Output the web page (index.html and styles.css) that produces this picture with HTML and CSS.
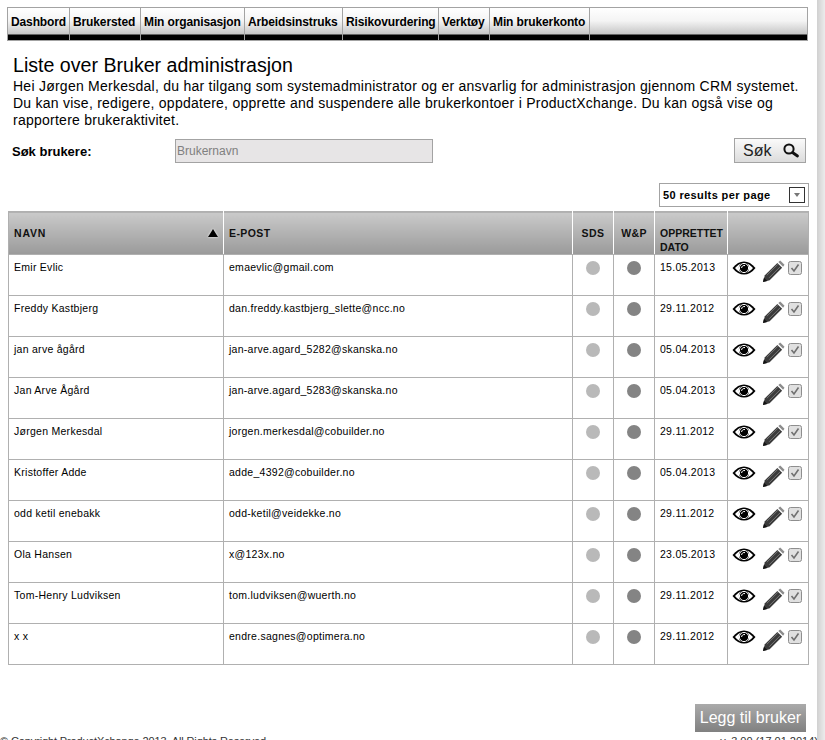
FILE: index.html
```html
<!DOCTYPE html>
<html>
<head>
    <title>Liste over Bruker administrasjon</title>
    <link rel="stylesheet" href="styles.css">
</head>
<body>
    <svg class="defs" width="0" height="0">
        <symbol id="eye" viewBox="0 0 24 14">
            <path d="M0.5 7C4 2.4 8 0.4 12 0.4S20 2.4 23.5 7C20 11.6 16 13.6 12 13.6S4 11.6 0.5 7Z" fill="#000"/>
            <path d="M3 7C5.5 4 8 2.6 9 2.4A6 6 0 0 0 9 11.6C8 11.4 5.5 10 3 7ZM21 7C18.5 4 16 2.6 15 2.4A6 6 0 0 1 15 11.6C16 11.4 18.5 10 21 7Z" fill="#fff"/>
            <circle cx="12" cy="7" r="4.6" fill="none" stroke="#fff" stroke-width="1"/>
            <path d="M9.6 7A2.6 2.6 0 0 1 13 4.6" fill="none" stroke="#fff" stroke-width="1"/>
        </symbol>
        <symbol id="pencil" viewBox="0 0 24 24">
            <path d="M1 23L3 16L16 3L21 8L8 21Z" fill="#3a3a3a"/>
            <path d="M5 16L16.5 4.5M7.5 18.5L19 7" stroke="#777" stroke-width="1"/>
            <path d="M17 2L19 0.5L23.5 5L22 7Z" fill="#8c8c8c"/>
            <path d="M1 23L2 18.5L5.5 22Z" fill="#111"/>
        </symbol>
        <symbol id="check" viewBox="0 0 14 14">
            <rect x="0.5" y="0.5" width="13" height="13" rx="2" fill="#e0e0e0" stroke="#8e8e8e"/>
            <path d="M3.5 7L6 10L10.5 3.5" fill="none" stroke="#707070" stroke-width="1.6"/>
        </symbol>
    </svg>

    <div class="page">
        <!-- top menu -->
        <ul class="menu">
            <li>Dashbord</li>
            <li>Brukersted</li>
            <li>Min organisasjon</li>
            <li>Arbeidsinstruks</li>
            <li>Risikovurdering</li>
            <li>Verktøy</li>
            <li>Min brukerkonto</li>
            <li class="menu-rest"></li>
        </ul>

        <div class="intro">
            <h1>Liste over Bruker administrasjon</h1>
            <p>Hei Jørgen Merkesdal, du har tilgang som systemadministrator og er ansvarlig for administrasjon gjennom CRM systemet. Du kan vise, redigere, oppdatere, opprette and suspendere alle brukerkontoer i ProductXchange. Du kan også vise og rapportere brukeraktivitet.</p>
        </div>

        <!-- search -->
        <div class="search">
            <label class="search-label">Søk brukere:</label>
            <input class="search-input" type="text" placeholder="Brukernavn">
            <a class="search-button" href="#">Søk
                <svg width="18" height="15" viewBox="0 0 18 15"><circle cx="7" cy="6" r="4.6" fill="none" stroke="#111" stroke-width="2"/><path d="M10.5 9.5L15.5 13" stroke="#111" stroke-width="2.8" stroke-linecap="round"/></svg>
            </a>
        </div>

        <div class="pager">
            <div class="per-page">50 results per page <span class="arrow"></span></div>
        </div>

        <table class="users">
            <thead>
                <tr>
                    <th class="col-name">NAVN<span class="sort"></span></th>
                    <th class="col-mail">E-POST</th>
                    <th class="col-dot mid">SDS</th>
                    <th class="col-dot mid">W&amp;P</th>
                    <th class="col-date">OPPRETTET DATO</th>
                    <th class="col-act"></th>
                </tr>
            </thead>
            <tbody>
                <tr><td>Emir Evlic</td><td>emaevlic@gmail.com</td><td class="mid"><i class="dot light"></i></td><td class="mid"><i class="dot dark"></i></td><td>15.05.2013</td><td class="actions"><svg class="i-eye"><use href="#eye"/></svg><svg class="i-pencil"><use href="#pencil"/></svg><svg class="i-check"><use href="#check"/></svg></td></tr>
                <tr><td>Freddy Kastbjerg</td><td>dan.freddy.kastbjerg_slette@ncc.no</td><td class="mid"><i class="dot light"></i></td><td class="mid"><i class="dot dark"></i></td><td>29.11.2012</td><td class="actions"><svg class="i-eye"><use href="#eye"/></svg><svg class="i-pencil"><use href="#pencil"/></svg><svg class="i-check"><use href="#check"/></svg></td></tr>
                <tr><td>jan arve ågård</td><td>jan-arve.agard_5282@skanska.no</td><td class="mid"><i class="dot light"></i></td><td class="mid"><i class="dot dark"></i></td><td>05.04.2013</td><td class="actions"><svg class="i-eye"><use href="#eye"/></svg><svg class="i-pencil"><use href="#pencil"/></svg><svg class="i-check"><use href="#check"/></svg></td></tr>
                <tr><td>Jan Arve Ågård</td><td>jan-arve.agard_5283@skanska.no</td><td class="mid"><i class="dot light"></i></td><td class="mid"><i class="dot dark"></i></td><td>05.04.2013</td><td class="actions"><svg class="i-eye"><use href="#eye"/></svg><svg class="i-pencil"><use href="#pencil"/></svg><svg class="i-check"><use href="#check"/></svg></td></tr>
                <tr><td>Jørgen Merkesdal</td><td>jorgen.merkesdal@cobuilder.no</td><td class="mid"><i class="dot light"></i></td><td class="mid"><i class="dot dark"></i></td><td>29.11.2012</td><td class="actions"><svg class="i-eye"><use href="#eye"/></svg><svg class="i-pencil"><use href="#pencil"/></svg><svg class="i-check"><use href="#check"/></svg></td></tr>
                <tr><td>Kristoffer Adde</td><td>adde_4392@cobuilder.no</td><td class="mid"><i class="dot light"></i></td><td class="mid"><i class="dot dark"></i></td><td>05.04.2013</td><td class="actions"><svg class="i-eye"><use href="#eye"/></svg><svg class="i-pencil"><use href="#pencil"/></svg><svg class="i-check"><use href="#check"/></svg></td></tr>
                <tr><td>odd ketil enebakk</td><td>odd-ketil@veidekke.no</td><td class="mid"><i class="dot light"></i></td><td class="mid"><i class="dot dark"></i></td><td>29.11.2012</td><td class="actions"><svg class="i-eye"><use href="#eye"/></svg><svg class="i-pencil"><use href="#pencil"/></svg><svg class="i-check"><use href="#check"/></svg></td></tr>
                <tr><td>Ola Hansen</td><td>x@123x.no</td><td class="mid"><i class="dot light"></i></td><td class="mid"><i class="dot dark"></i></td><td>23.05.2013</td><td class="actions"><svg class="i-eye"><use href="#eye"/></svg><svg class="i-pencil"><use href="#pencil"/></svg><svg class="i-check"><use href="#check"/></svg></td></tr>
                <tr><td>Tom-Henry Ludviksen</td><td>tom.ludviksen@wuerth.no</td><td class="mid"><i class="dot light"></i></td><td class="mid"><i class="dot dark"></i></td><td>29.11.2012</td><td class="actions"><svg class="i-eye"><use href="#eye"/></svg><svg class="i-pencil"><use href="#pencil"/></svg><svg class="i-check"><use href="#check"/></svg></td></tr>
                <tr><td>x x</td><td>endre.sagnes@optimera.no</td><td class="mid"><i class="dot light"></i></td><td class="mid"><i class="dot dark"></i></td><td>29.11.2012</td><td class="actions"><svg class="i-eye"><use href="#eye"/></svg><svg class="i-pencil"><use href="#pencil"/></svg><svg class="i-check"><use href="#check"/></svg></td></tr>
            </tbody>
        </table>

        <div class="add-row">
            <a class="add-button" href="#">Legg til bruker</a>
        </div>

        <div class="footer">
            <span class="copyright">© Copyright ProductXchange 2013. All Rights Reserved</span>
            <span>v. 3.00 (17.01.2014)</span>
        </div>
    </div>

    <!-- the scrollbar edge on the right -->
    <div class="edge"></div>
</body>
</html>
```

FILE: styles.css
```css
html, body {
    height: 740px;
    overflow: hidden;
}

body {
    margin: 0;
    display: flex;
    font-family: "Liberation Sans", Arial, sans-serif;
    color: #000;
    background: #fff;
}

.defs {
    position: absolute;
}

.page {
    width: 817px;
    flex: none;
}

.edge {
    flex: 1;
    background: linear-gradient(to right, #d0d0d0, #ececec);
}

/* Top menu */
.menu {
    display: grid;
    grid-template-columns: 62px 71px 104px 98px 96px 51px 100px 1fr;
    list-style: none;
    margin: 7px 9px 0 7px;
    padding: 0;
    height: 32px;
    border: 1px solid #a3a3a3;
    background: linear-gradient(#fff, #f4f4f4 40%, #c6c6c6 26px, #c6c6c6 26px, #000 27px);
}

.menu li {
    padding: 7px 0 0 3px;
    font-size: 12px;
    font-weight: bold;
    letter-spacing: -0.12px;
    white-space: nowrap;
    border-right: 1px solid #a3a3a3;
}

.menu .menu-rest {
    border-right: 0;
}

/* Heading and text */
.intro {
    margin: 13px 0 0 13px;
}

.intro h1 {
    margin: 0;
    font-size: 19.6px;
    font-weight: normal;
    line-height: 23px;
}

.intro p {
    margin: 1px 0 0 0;
    font-size: 14px;
    letter-spacing: 0.25px;
    line-height: 17px;
    width: 800px;
}

/* Search */
.search {
    display: flex;
    align-items: center;
    height: 25px;
    margin: 9px 11px 0 12px;
}

.search-label {
    width: 163px;
    padding-top: 2px;
    font-size: 13px;
    font-weight: bold;
}

.search-input {
    width: 258px;
    height: 24px;
    box-sizing: border-box;
    padding: 0 0 0 1px;
    border: 1px solid #a3a3a3;
    background: #e7e5e6;
    font-family: inherit;
    font-size: 12px;
}

.search-input::placeholder {
    color: #808080;
    opacity: 1;
}

.search-button {
    margin-left: auto;
    display: flex;
    align-items: center;
    justify-content: space-between;
    box-sizing: border-box;
    width: 72px;
    height: 25px;
    padding: 0 5px 0 8px;
    border: 1px solid #a3a3a3;
    background: linear-gradient(#fafafa, #dcdcdc);
    font-size: 16px;
    color: #222;
    text-decoration: none;
}

/* Results per page */
.pager {
    display: flex;
    justify-content: flex-end;
    margin: 20px 8px 0 0;
}

.per-page {
    display: flex;
    align-items: center;
    justify-content: space-between;
    box-sizing: border-box;
    width: 150px;
    height: 24px;
    padding: 0 3px 0 3px;
    border: 1px solid #a3a3a3;
    font-size: 11px;
    font-weight: bold;
    letter-spacing: 0.38px;
}

.arrow {
    display: flex;
    align-items: center;
    justify-content: center;
    box-sizing: border-box;
    width: 16px;
    height: 16px;
    border: 1px solid #333;
}

.arrow::after {
    content: "";
    border: 3px solid transparent;
    border-top: 4px solid #777;
    border-bottom: 0;
}

/* Table */
.users {
    table-layout: fixed;
    border-collapse: collapse;
    width: 801px;
    margin: 4px 0 0 8px;
    font-size: 10.5px;
    letter-spacing: 0.27px;
}

.users th {
    height: 42px;
    box-sizing: border-box;
    padding: 14px 5px 0 5px;
    position: relative;
    vertical-align: top;
    text-align: left;
    font-size: 10.5px;
    font-weight: bold;
    line-height: 14px;
    letter-spacing: 0.4px;
    color: #111;
    border: 1px solid #fff;
    border-top-color: #b0b0b0;
    border-bottom-color: #b0b0b0;
    background: linear-gradient(#cacaca, #9a9a9a);
}

.users th:first-child {
    border-left-color: #b0b0b0;
}

.users th:last-child {
    border-right-color: #b0b0b0;
}

.users td {
    height: 41px;
    box-sizing: border-box;
    padding: 6px 5px 0 5px;
    vertical-align: top;
    line-height: 13px;
    border: 1px solid #b0b0b0;
}

.users .mid {
    text-align: center;
}

.users .col-name { width: 215px; letter-spacing: 0.8px; }
.users .col-mail { width: 349px; }
.users .col-dot { width: 41px; }
.users .col-date { width: 73px; letter-spacing: 0; }
.users .col-act { width: 81px; }

.sort {
    position: absolute;
    right: 5px;
    top: 17px;
    border: 5px solid transparent;
    border-top: 0;
    border-bottom: 8px solid #000;
    filter: drop-shadow(0 0 1px #fff);
}

.dot {
    display: block;
    width: 14px;
    height: 14px;
    margin: 0 auto;
    border-radius: 50%;
}

.light { background: #b9b9b9; }
.dark { background: #848484; }

.users .actions {
    padding: 4px 0 0 4px;
    white-space: nowrap;
}

.actions svg {
    vertical-align: top;
}

.i-eye {
    width: 24px;
    height: 14px;
    margin-top: 2px;
}

.i-pencil {
    width: 23px;
    height: 23px;
    margin-left: 6px;
    margin-top: 1px;
}

.i-check {
    width: 14px;
    height: 14px;
    margin-left: 3px;
    margin-top: 2px;
}

/* Bottom */
.add-row {
    display: flex;
    justify-content: flex-end;
    margin: 39px 11px 0 0;
}

.add-button {
    width: 111px;
    height: 28px;
    line-height: 28px;
    text-align: center;
    background: linear-gradient(#aaa, #808080);
    color: #fff;
    font-size: 16px;
    text-decoration: none;
}

.footer {
    display: flex;
    justify-content: space-between;
    margin: 3px -1px 0 0;
    font-size: 11px;
    color: #333;
}

.copyright {
    letter-spacing: -0.12px;
}
```
